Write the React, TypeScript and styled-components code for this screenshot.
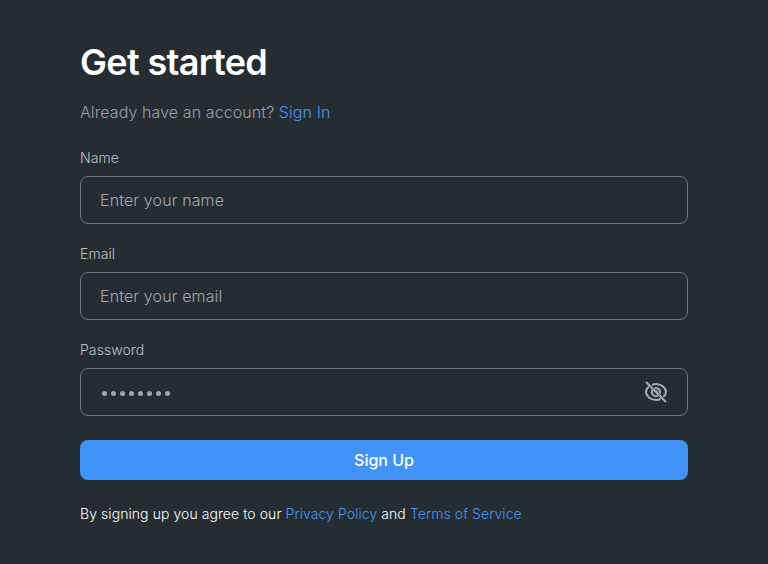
import React, { useState } from "react";
import styled, { createGlobalStyle } from "styled-components";

const GlobalStyle = createGlobalStyle`
  *, *::before, *::after { box-sizing: border-box; }
  body {
    margin: 0;
    background: #252d33;
    font-family: Inter, "Liberation Sans", sans-serif;
    color: #fdfefe;
    -webkit-font-smoothing: antialiased;
  }
`;

const Page = styled.main`
  display: flex;
  flex-direction: column;
  height: 564px;
  padding: 38px 80px 0;
  overflow: hidden;
`;

const Title = styled.h1`
  margin: 0;
  font-size: 36px;
  line-height: 48px;
  font-weight: 600;
  letter-spacing: -0.66px;
`;

const Prompt = styled.p`
  margin: 14px 0 0;
  font-size: 16px;
  line-height: 24px;
  font-weight: 300;
  letter-spacing: 0.09px;
  color: #9aa2a9;
`;

const Link = styled.a`
  color: #4698f5;
  text-decoration: none;
`;

const Form = styled.form`
  display: flex;
  flex-direction: column;
  gap: 20px;
  margin-top: 24px;
`;

const Field = styled.label`
  display: flex;
  flex-direction: column;
  gap: 8px;
`;

const Label = styled.span`
  font-size: 14px;
  line-height: 20px;
  font-weight: 300;
  letter-spacing: 0.08px;
  color: #bbc3ca;
`;

const InputFrame = styled.span`
  display: flex;
  align-items: center;
  height: 48px;
  padding: 0 19px;
  border: 1px solid #70777d;
  border-radius: 8px;
`;

const Input = styled.input`
  flex: 1;
  min-width: 0;
  padding: 0;
  border: 0;
  outline: 0;
  background: transparent;
  font: 300 16px/24px Inter, "Liberation Sans", sans-serif;
  letter-spacing: 0.12px;
  color: #a5adb5;
  &::placeholder { color: #a2aab1; opacity: 1; }
`;

const Dots = styled.span`
  display: flex;
  flex: 1;
  gap: 4px;
  padding: 2px 0 0 2px;
`;

const Dot = styled.i`
  width: 5px;
  height: 5px;
  border-radius: 50%;
  background: #a0a7af;
`;

const IconButton = styled.button`
  display: flex;
  padding: 0;
  border: 0;
  background: none;
  color: #a5adb5;
`;

const Submit = styled.button`
  height: 40px;
  margin-top: 4px;
  padding: 0;
  border: 0;
  border-radius: 8px;
  background: #4193f7;
  color: #fff;
  font: 500 16px/24px Inter, "Liberation Sans", sans-serif;
`;

const Terms = styled.p`
  margin: 24px 0 0;
  font-size: 14px;
  line-height: 20px;
  font-weight: 300;
  letter-spacing: 0.07px;
  color: #fff;
`;

function HiddenEye() {
  return (
    <svg width="24" height="24" viewBox="0 0 24 24" fill="none" stroke="currentColor" strokeWidth="2">
      <path d="M8 5C9.200 4.300 10.600 4 12 4c5.500 0 10 4 10 8 0 1.800-1 3.600-2.700 5M5 6.500C3.100 8 2 10 2 12c0 4 4.500 8 10 8 1.600 0 3.100-.3 4.500-1" />
      <path d="M10.500 8.300A4 4 0 0 1 15.700 13.500M8.500 10A4 4 0 0 0 14 15.500M11.300 10.500l2.200 2.200" />
      <path d="M2 2l20 20" />
    </svg>
  );
}

export default function App() {
  const [name, setName] = useState("");
  const [email, setEmail] = useState("");
  return (
    <Page>
      <GlobalStyle />
      <Title>Get started</Title>
      <Prompt>Already have an account? <Link>Sign In</Link></Prompt>
      <Form onSubmit={(e) => e.preventDefault()}>
        <Field>
          <Label>Name</Label>
          <InputFrame><Input placeholder="Enter your name" value={name} onChange={(e) => setName(e.target.value)} /></InputFrame>
        </Field>
        <Field>
          <Label>Email</Label>
          <InputFrame><Input placeholder="Enter your email" value={email} onChange={(e) => setEmail(e.target.value)} /></InputFrame>
        </Field>
        <Field>
          <Label>Password</Label>
          <InputFrame>
            <Dots>{Array.from({ length: 8 }, (_, i) => <Dot key={i} />)}</Dots>
            <IconButton type="button" aria-label="Show password"><HiddenEye /></IconButton>
          </InputFrame>
        </Field>
        <Submit>Sign Up</Submit>
      </Form>
      <Terms>By signing up you agree to our <Link>Privacy Policy</Link> and <Link>Terms of Service</Link></Terms>
    </Page>
  );
}
